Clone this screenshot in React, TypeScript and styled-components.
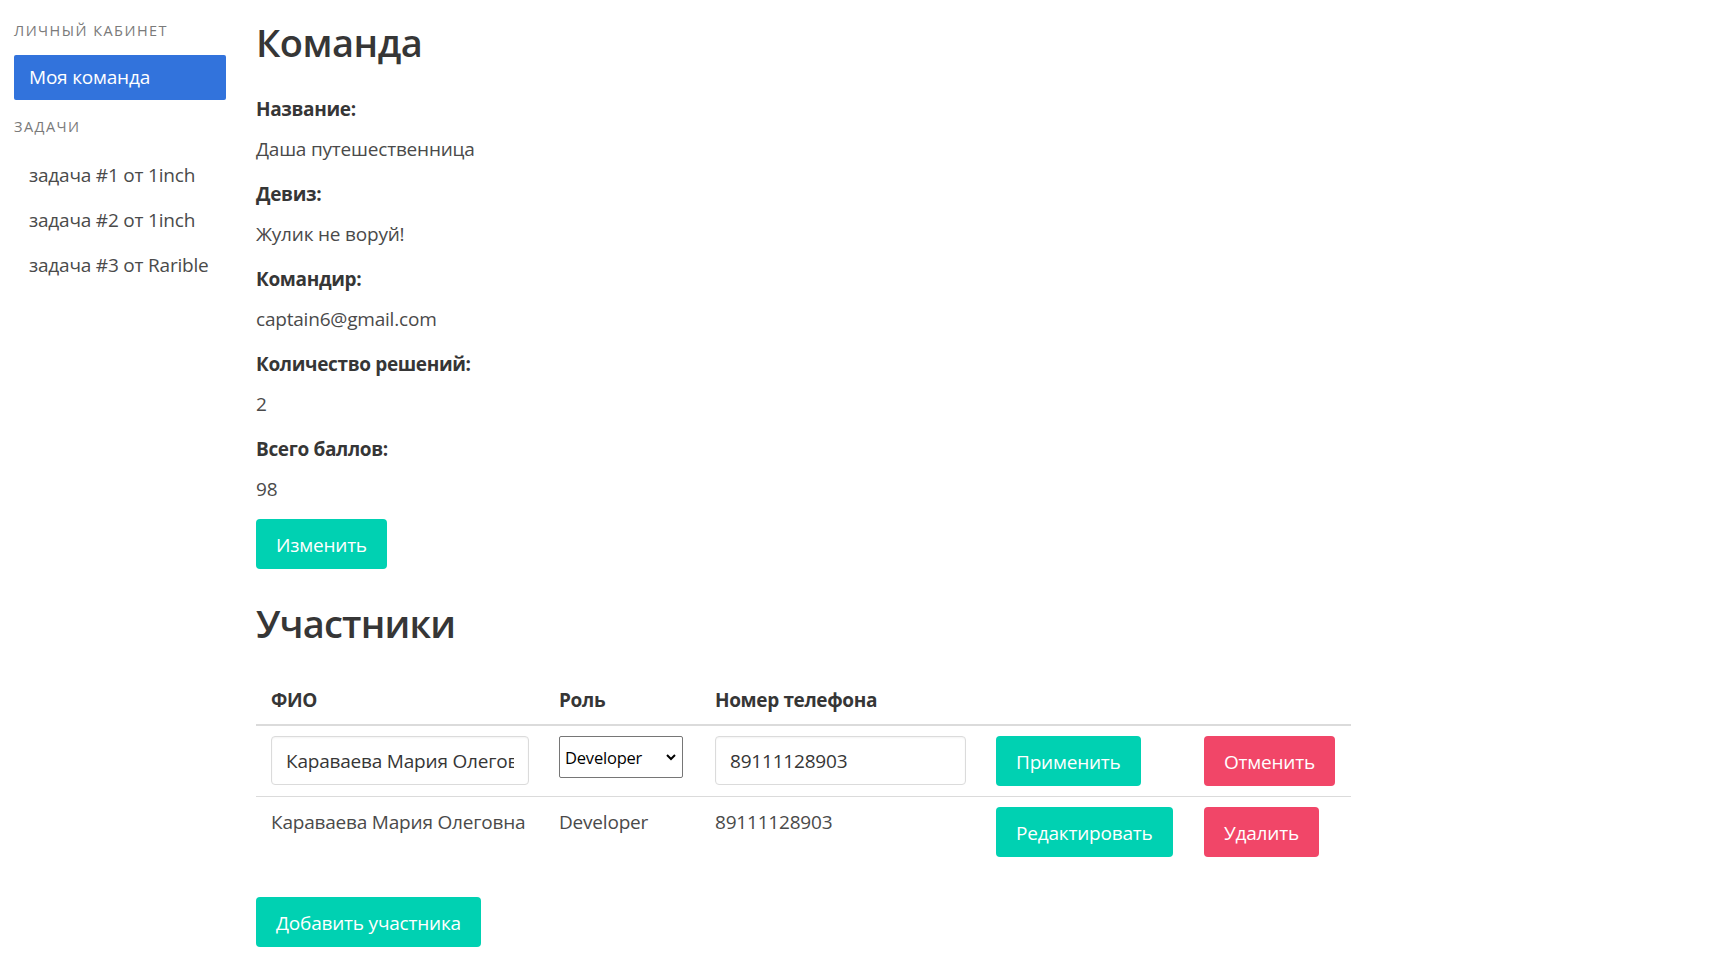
import React from "react";
import styled, { createGlobalStyle } from "styled-components";

const GlobalStyle = createGlobalStyle`
  * { box-sizing: border-box; }
  html, body { margin: 0; padding: 0; background: #fff; }
  body {
    font-family: "Open Sans", "Noto Sans", "Liberation Sans", sans-serif;
    font-size: 19px;
    line-height: 30px;
    letter-spacing: -0.2px;
    color: #4a4a4a;
  }
`;

const Page = styled.div`
  display: flex;
  align-items: flex-start;
  padding: 19px 0 0 14px;
`;

const Sidebar = styled.aside`
  width: 212px;
  flex: none;
  padding-top: 2px;
`;

const MenuLabel = styled.p<{ $spaced?: boolean }>`
  margin: ${(p) => (p.$spaced ? "17px 0 17px" : "0 0 15px")};
  font-size: 14.5px;
  line-height: 19px;
  letter-spacing: 0.1em;
  text-transform: uppercase;
  color: #7a7a7a;
`;

const MenuList = styled.ul`
  list-style: none;
  margin: 0;
  padding: 0;
`;

const MenuLink = styled.a<{ $active?: boolean }>`
  display: block;
  padding: 10px 15px;
  line-height: 25px;
  border-radius: 2px;
  text-decoration: none;
  white-space: nowrap;
  cursor: pointer;
  color: ${(p) => (p.$active ? "#fff" : "#4a4a4a")};
  background: ${(p) => (p.$active ? "#3273dc" : "transparent")};
`;

const Main = styled.main`
  margin-left: 30px;
  flex: 1;
`;

const Title = styled.h1`
  margin: 1px 0 29px;
  font-size: 38px;
  font-weight: 600;
  line-height: 45px;
  letter-spacing: -0.5px;
  color: #363636;
`;

const SectionTitle = styled(Title).attrs({ as: "h2" })`
  margin-top: 32px;
  letter-spacing: -0.8px;
`;

const FieldLabel = styled.p`
  margin: 0 0 10px;
  font-weight: 700;
  letter-spacing: -0.35px;
  color: #363636;
`;

const FieldValue = styled.p`
  margin: 0 0 15px;
`;

const Button = styled.button<{ $variant?: "primary" | "danger" }>`
  display: inline-flex;
  align-items: center;
  justify-content: center;
  height: 50px;
  padding: 1px 20px 0;
  border: none;
  border-radius: 4px;
  font-family: inherit;
  font-size: 19px;
  letter-spacing: inherit;
  line-height: 30px;
  color: #fff;
  cursor: pointer;
  background: ${(p) => (p.$variant === "danger" ? "#f14668" : "#00d1b2")};
`;

const Table = styled.table`
  width: 1095px;
  border-collapse: collapse;
  table-layout: fixed;
  margin-bottom: 30px;
  color: #363636;
`;

const Th = styled.th`
  text-align: left;
  font-weight: 700;
  letter-spacing: -0.35px;
  color: #363636;
  padding: 10px 15px 9px;
  border-bottom: 2px solid #dbdbdb;
`;

const Tr = styled.tr<{ $last?: boolean }>`
  & > td {
    border-bottom: ${(p) => (p.$last ? "0" : "1px solid #dbdbdb")};
  }
`;

const Td = styled.td`
  padding: 10px 15px;
  vertical-align: top;
  color: #4a4a4a;
  white-space: nowrap;
`;

const Input = styled.input`
  width: 100%;
  height: 49px;
  padding: 0 14px;
  border: 1px solid #dbdbdb;
  border-radius: 4px;
  box-shadow: inset 0 1px 2px rgba(10, 10, 10, 0.05);
  font-family: inherit;
  font-size: 19px;
  letter-spacing: inherit;
  color: #363636;
  outline: none;
`;

const SelectWrap = styled.div`
  position: relative;
  width: 124px;
  height: 42px;
`;

const Select = styled.select`
  appearance: none;
  width: 100%;
  height: 100%;
  padding: 0 24px 0 5px;
  border: 1px solid #767676;
  border-radius: 2px;
  background: #fff;
  font-family: inherit;
  font-size: 16.5px;
  letter-spacing: -0.2px;
  color: #000;
  outline: none;
`;

const Chevron = styled.svg`
  position: absolute;
  right: 6px;
  top: 15px;
  pointer-events: none;
`;

const Columns = styled.colgroup``;

const cols = [288, 156, 281, 208, 162];

const menuTasks = ["задача #1 от 1inch", "задача #2 от 1inch", "задача #3 от Rarible"];

const fields: [string, string][] = [
  ["Название:", "Даша путешественница"],
  ["Девиз:", "Жулик не воруй!"],
  ["Командир:", "captain6@gmail.com"],
  ["Количество решений:", "2"],
  ["Всего баллов:", "98"],
];

export default function App() {
  return (
    <>
      <GlobalStyle />
      <Page>
        <Sidebar>
          <MenuLabel>Личный кабинет</MenuLabel>
          <MenuList>
            <li>
              <MenuLink $active>Моя команда</MenuLink>
            </li>
          </MenuList>
          <MenuLabel $spaced>Задачи</MenuLabel>
          <MenuList>
            {menuTasks.map((t) => (
              <li key={t}>
                <MenuLink>{t}</MenuLink>
              </li>
            ))}
          </MenuList>
        </Sidebar>
        <Main>
          <Title>Команда</Title>
          {fields.map(([label, value]) => (
            <React.Fragment key={label}>
              <FieldLabel>{label}</FieldLabel>
              <FieldValue>{value}</FieldValue>
            </React.Fragment>
          ))}
          <Button $variant="primary">Изменить</Button>
          <SectionTitle>Участники</SectionTitle>
          <Table>
            <Columns>
              {cols.map((w, i) => (
                <col key={i} style={{ width: w }} />
              ))}
            </Columns>
            <thead>
              <tr>
                <Th>ФИО</Th>
                <Th>Роль</Th>
                <Th>Номер телефона</Th>
                <Th />
                <Th />
              </tr>
            </thead>
            <tbody>
              <Tr>
                <Td>
                  <Input defaultValue="Караваева Мария Олеговна" />
                </Td>
                <Td>
                  <SelectWrap>
                    <Select defaultValue="Developer">
                      <option>Developer</option>
                      <option>Designer</option>
                      <option>Manager</option>
                    </Select>
                    <Chevron width="12" height="12" viewBox="0 0 12 12">
                      <path d="M2 4 L6 8 L10 4" fill="none" stroke="#000" strokeWidth="2" />
                    </Chevron>
                  </SelectWrap>
                </Td>
                <Td>
                  <Input defaultValue="89111128903" />
                </Td>
                <Td>
                  <Button $variant="primary">Применить</Button>
                </Td>
                <Td>
                  <Button $variant="danger">Отменить</Button>
                </Td>
              </Tr>
              <Tr $last>
                <Td>Караваева Мария Олеговна</Td>
                <Td>Developer</Td>
                <Td>89111128903</Td>
                <Td>
                  <Button $variant="primary">Редактировать</Button>
                </Td>
                <Td>
                  <Button $variant="danger">Удалить</Button>
                </Td>
              </Tr>
            </tbody>
          </Table>
          <Button $variant="primary">Добавить участника</Button>
        </Main>
      </Page>
    </>
  );
}
